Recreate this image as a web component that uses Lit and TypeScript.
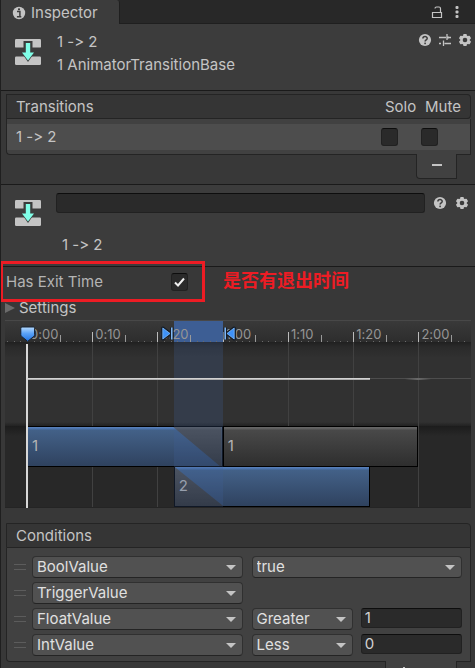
import { LitElement, html, svg, css } from "lit";
import { customElement } from "lit/decorators.js";

const helpIcon = html`<svg width="14" height="14" viewBox="0 0 14 14" aria-hidden="true">
  <circle cx="7" cy="7" r="6.1" fill="#c4c4c4" />
  <path d="M4.9 5.4C4.9 2.9 9.2 2.9 9.2 5.4C9.2 6.9 7.1 6.8 7.1 8.5" fill="none" stroke="#3c3c3c" stroke-width="1.5" />
  <rect x="6.3" y="9.6" width="1.6" height="1.6" fill="#3c3c3c" />
</svg>`;

const gearIcon = html`<svg width="14" height="14" viewBox="0 0 14 14" aria-hidden="true">
  <g fill="#c4c4c4">
    <rect x="5.2" y="0.9" width="3.6" height="12.2" rx="0.8" />
    <rect x="5.2" y="0.9" width="3.6" height="12.2" rx="0.8" transform="rotate(60 7 7)" />
    <rect x="5.2" y="0.9" width="3.6" height="12.2" rx="0.8" transform="rotate(120 7 7)" />
    <circle cx="7" cy="7" r="4.8" />
  </g>
  <circle cx="7" cy="7" r="2.3" fill="#3c3c3c" />
</svg>`;

const presetIcon = html`<svg width="14" height="14" viewBox="0 0 14 14" aria-hidden="true">
  <path d="M1 4.5H8M11 4.5H13M9 1V7M1 10.5H3M6.5 10.5H13M5.5 7.5V13" fill="none" stroke="#c4c4c4" stroke-width="1.3" />
  <path d="M9 4.5H11" stroke="#c4c4c4" stroke-width="1.8" />
</svg>`;

const transitionIcon = html`<svg class="asset" width="28" height="28" viewBox="0 0 28 28" aria-hidden="true">
  <rect x="1" y="1" width="26" height="8.6" rx="1.2" fill="#c4c4c4" />
  <rect x="1" y="18.4" width="26" height="8.6" rx="1.2" fill="#c4c4c4" />
  <path d="M9.5 3H18.5V12H22.3L14 24L5.7 12H9.5Z" fill="#3c3c3c" />
  <path d="M11.8 5H16.2V14.6H20L14 22.6L8 14.6H11.8Z" fill="#80ffe8" />
</svg>`;

const ORIGIN = 4.72;
const PER_FRAME = 1.4;
const at = (frame: number) => `left:${(ORIGIN + frame * PER_FRAME).toFixed(2)}%`;
const span = (from: number, to: number) =>
  `${at(from)};width:${((to - from) * PER_FRAME).toFixed(2)}%`;

@customElement("transition-timeline")
export class TransitionTimeline extends LitElement {
  static styles = css`
    :host {
      display: block;
      position: relative;
      overflow: hidden;
      color: #959595;
    }
    .ruler {
      position: relative;
      height: 22px;
      border-top: 1px solid #484848;
      background: linear-gradient(#393939, #2d2d2d);
      font-size: 13px;
      line-height: 26px;
      box-sizing: border-box;
    }
    .curve {
      position: relative;
      height: 84px;
      background: linear-gradient(#202020, #2a2a2a 5px, #313131 16px, #313131 80px, #222);
    }
    .tracks {
      position: relative;
      height: 82px;
      background: linear-gradient(#1c1c1c, #282828 10px);
      border-bottom: 1px solid #242424;
      box-sizing: border-box;
    }
    .label, .tick, .grid, .clip, .range, .dot, .line, .head, .mark {
      position: absolute;
    }
    .label { margin-left: 3px; top: 0; }
    .tick { bottom: 0; width: 1px; height: 7px; background: #999; }
    .tick.major { height: 10px; background: #bbb; }
    .dot { bottom: 0; width: 1px; height: 1px; background: #6a6a6a; }
    .grid { top: 0; bottom: 0; width: 1px; background: #414141; }
    .range { top: 0; bottom: 0; }
    .range.strong { background: #3d5e94; }
    .range.soft { background: rgba(62, 95, 150, 0.25); }
    .line { top: 36px; height: 2px; background: linear-gradient(#e4e4e4, #9a9a9a); }
    .line.dim { right: 0; height: 1px; background: #4d4d4d; }
    .line.blip { background: linear-gradient(90deg, transparent, #6a6a6a, transparent); }
    .clip {
      height: 41px;
      box-sizing: border-box;
      border: 1px solid #000;
      padding-left: 4px;
      line-height: 38px;
      font-size: 15px;
      color: #b4b4b4;
    }
    .blue { background: linear-gradient(#5b82bd, #4870a8 2px, #436188 3px, #2f425f); }
    .gray { background: linear-gradient(#686868, #5c5c5c 2px, #494949 3px, #2e2e2e); }
    .upper { top: 0; }
    .lower { top: 40px; }
    .fade { position: absolute; top: 0; bottom: 0; width: 25%; background: linear-gradient(#606060, #4e4e4e 3px, #303030); }
    .out { right: 0; clip-path: polygon(0 0, 100% 0, 100% 100%, 96% 100%); }
    .in { left: 0; clip-path: polygon(0 0, 100% 100%, 0 100%); }
    .text { position: relative; }
    .playhead { position: absolute; top: 24px; bottom: 0; width: 2px; margin-left: -1px; background: #d8d8d8; }
    .head { top: 6px; margin-left: -7px; }
    .mark { top: 5px; }
    .before { margin-left: -13px; }
    svg { display: block; }
  `;

  render() {
    const labels = ["0:00", "0:10", "0:20", "1:00", "1:10", "1:20", "2:00"];
    const frames = Array.from({ length: 71 }, (_, i) => i - 3);
    const grid = [10, 20, 40, 50, 60].map((f) => html`<div class="grid" style=${at(f)}></div>`);
    return html`
      <div class="ruler">
        <div class="range strong" style=${span(22.5, 30)}></div>
        ${frames.map((f) =>
          f > 0 && f % 5 === 0
            ? html`<div class="tick ${f % 10 ? "" : "major"}" style=${at(f)}></div>`
            : html`<div class="dot" style=${at(f)}></div>`
        )}
        ${labels.map((t, i) => html`<span class="label" style=${at(i * 10)}>${t}</span>`)}
        <svg class="mark before" style=${at(22.5)} width="13" height="15" viewBox="0 0 13 15">
          <path d="M1.8 2.2L9 7.5L1.8 12.8ZM10.8 1.5V13.5" fill="none" stroke="#141c28" stroke-width="3.4" stroke-linejoin="round" />
          <path d="M1.8 2L9 7.5L1.8 13Z" fill="#3f92f8" stroke="#7dbcff" stroke-width="0.8" />
          <path d="M10.8 1.5V13.5" stroke="#86c0ff" stroke-width="1.5" />
        </svg>
        <svg class="mark" style=${at(30)} width="13" height="15" viewBox="0 0 13 15">
          <path d="M11.2 2.2L4 7.5L11.2 12.8ZM2.2 1.5V13.5" fill="none" stroke="#141c28" stroke-width="3.4" stroke-linejoin="round" />
          <path d="M11.2 2L4 7.5L11.2 13Z" fill="#3f92f8" stroke="#7dbcff" stroke-width="0.8" />
          <path d="M2.2 1.5V13.5" stroke="#86c0ff" stroke-width="1.5" />
        </svg>
      </div>
      <div class="curve">
        ${grid}
        <div class="range soft" style=${span(22.5, 30)}></div>
        <div class="line" style=${span(0, 52.6)}></div>
        <div class="line dim" style=${at(52.6)}></div>
        <div class="line blip" style=${span(58, 62)}></div>
      </div>
      <div class="tracks">
        ${grid}
        <div class="clip upper gray" style=${span(30, 60)}><span class="text">1</span></div>
        <div class="clip upper blue" style=${span(0, 30)}>
          <div class="fade out"></div><span class="text">1</span>
        </div>
        <div class="clip lower blue" style=${span(22.5, 52.5)}>
          <div class="fade in"></div><span class="text">2</span>
        </div>
        <div class="range soft" style=${span(22.5, 30)}></div>
      </div>
      <div class="playhead" style=${at(0)}></div>
      <svg class="head" style=${at(0)} width="16" height="17" viewBox="0 0 16 17">
        ${svg`<defs><linearGradient id="g" x1="0" y1="0" x2="0" y2="1">
          <stop offset="0" stop-color="#b8dcff" /><stop offset="0.45" stop-color="#5aa2f8" /><stop offset="1" stop-color="#1e70e0" />
        </linearGradient></defs>`}
        <path d="M2 1H13.4Q14.6 1 14.6 2.2V8.6Q14.6 9.6 13.8 10.4L7.7 15.4L1.6 10.4Q0.8 9.6 0.8 8.6V2.2Q0.8 1 2 1Z" fill="url(#g)" stroke="#16202f" stroke-width="1" />
      </svg>
    `;
  }
}

interface Condition {
  name: string;
  mode?: string;
  value?: string;
}

const CONDITIONS: Condition[] = [
  { name: "BoolValue", mode: "true" },
  { name: "TriggerValue" },
  { name: "FloatValue", mode: "Greater", value: "1" },
  { name: "IntValue", mode: "Less", value: "0" },
];

@customElement("app-root")
export class AppRoot extends LitElement {
  static styles = css`
    :host {
      display: block;
      height: 100vh;
      overflow: hidden;
      box-sizing: border-box;
      border-left: 1px solid #1f1f1f;
      background: #383838;
      color: #c4c4c4;
      font: 15px/24px Inter, "Noto Sans CJK SC", sans-serif;
      font-variant-ligatures: none;
    }
    * { box-sizing: border-box; }
    svg { display: block; }
    button, input, select { font: inherit; color: inherit; margin: 0; }
    button { display: block; padding: 0; border: 0; background: none; }
    .tabs {
      display: flex;
      height: 24px;
      background: #282828;
      border-bottom: 1px solid #1f1f1f;
    }
    .tab {
      display: flex;
      align-items: center;
      gap: 5px;
      width: 119px;
      height: 24px;
      padding: 1px 0 0 11px;
      background: #3c3c3c;
      border-right: 1px solid #1f1f1f;
      border-radius: 0 3px 0 0;
    }
    .tools { display: flex; align-items: center; margin-left: auto; gap: 6px; padding-right: 3px; }
    .tabs .tools { padding-right: 11px; }
    .header {
      display: flex;
      padding: 6px 0 0 13px;
      height: 66px;
      background: #3c3c3c;
      line-height: 23px;
      gap: 15px;
    }
    .asset { margin-top: 8px; flex: none; }
    .title, .kind { margin: 0; font: inherit; line-height: 23px; }
    .header .tools { height: 20px; }
    .sep { height: 1px; background: #1a1a1a; }
    .block { padding: 0 4px 0 5px; }
    .transitions { padding-top: 3px; height: 93px; }
    table {
      width: 100%;
      border-spacing: 0;
      table-layout: fixed;
    }
    th {
      height: 25px;
      padding: 0;
      background: #353535;
      border: solid #242424;
      border-width: 1px 0;
      font-weight: 400;
      text-align: left;
      line-height: 22px;
    }
    th:first-child { border-left-width: 1px; padding-left: 9px; }
    th:last-child { border-right-width: 1px; border-top-right-radius: 4px; border-bottom-right-radius: 4px; }
    th.flag { padding-left: 4px; overflow: hidden; }
    .colflag { width: 40px; }
    .collast { width: 50px; }
    td {
      height: 36px;
      padding: 0;
      background: linear-gradient(#414141 5px, #4d4d4d 5px, #4d4d4d 31px, #414141 31px);
      border-bottom: 1px solid #242424;
    }
    td:first-child { border-left: 1px solid #242424; border-bottom-left-radius: 4px; padding-left: 9px; }
    td:last-child { border-right: 1px solid #242424; }
    .check {
      appearance: none;
      display: block;
      width: 17px;
      height: 18px;
      background: #2a2a2a;
      border: 1px solid #212121;
      border-top-color: #0d0d0d;
      border-radius: 3px;
    }
    .tick { position: relative; display: block; width: 17px; }
    .tick svg { position: absolute; left: 0; top: 0; pointer-events: none; }
    .foot {
      display: flex;
      justify-content: space-around;
      align-items: flex-start;
      position: relative;
      width: 41px;
      height: 25px;
      margin: -1px 14px 0 auto;
      background: #414141;
      border: 1px solid #242424;
      border-top: 0;
      border-radius: 0 0 0 4px;
    }
    .foot button { height: 22px; padding: 0 8px; }
    .wide { width: 72px; }
    .second { gap: 14px; height: 81px; padding-top: 8px; }
    .second .asset { margin-top: 6px; }
    .main { flex: 1; display: flex; flex-direction: column; gap: 20px; }
    .name { display: flex; align-items: center; gap: 8px; padding-right: 6px; }
    .main .title { padding-left: 6px; }
    .second .tools { height: 18px; gap: 8px; margin: 0; padding: 0; }
    .field {
      width: 100%;
      min-width: 0;
      height: 20px;
      padding: 0 3px;
      background: #2a2a2a;
      border: 1px solid #212121;
      border-top-color: #0d0d0d;
      border-radius: 3px;
      outline: 0;
    }
    .name .field { flex: 1; }
    .exit {
      position: relative;
      display: flex;
      align-items: center;
      height: 30px;
      padding-left: 5px;
      color: #b4b4b4;
    }
    .exit label { width: 165px; }
    .frame {
      position: absolute;
      left: -1px;
      top: -6px;
      width: 205px;
      height: 41px;
      border: 3px solid #ed1c24;
      pointer-events: none;
    }
    .note {
      margin: 0 0 6px 35px;
      color: #ed1c24;
      font: bold 18px/24px "Noto Sans CJK SC", sans-serif;
    }
    .fold { display: flex; align-items: center; gap: 4px; height: 23px; padding: 0 0 1px 4px; line-height: 22px; }
    transition-timeline { margin: 0 4px; }
    .conditions { padding-top: 15px; }
    .caption {
      margin: 0;
      height: 25px;
      padding-left: 9px;
      font: inherit;
      line-height: 24px;
      background: #353535;
      border: 1px solid #242424;
      border-top-right-radius: 4px;
    }
    .list {
      display: flex;
      flex-direction: column;
      gap: 4px;
      padding: 8px 8px 5px 7px;
      background: #414141;
      border: 1px solid #242424;
      border-top: 0;
      border-radius: 0 0 0 4px;
    }
    .row { display: grid; grid-template-columns: 9px 1fr 1fr; align-items: start; column-gap: 9px; height: 22px; }
    .grip { width: 12px; height: 6px; margin-top: 8px; border: solid #5c5c5c; border-width: 1px 0; }
    .args { display: grid; grid-auto-flow: column; grid-auto-columns: 1fr; gap: 8px; }
    .drop { position: relative; display: block; }
    .drop::after {
      content: "";
      position: absolute;
      right: 7px;
      top: 9px;
      border: 5px solid transparent;
      border-top-color: #c4c4c4;
      border-bottom: 0;
      pointer-events: none;
    }
    select {
      appearance: none;
      display: block;
      width: 100%;
      height: 22px;
      padding: 0 20px 0 4px;
      background: #515151;
      border: 1px solid #303030;
      border-bottom-color: #242424;
      border-radius: 4px;
      color: #e0e0e0;
      line-height: 20px;
    }
    .row .field { color: #d2d2d2; }
  `;

  private drop(label: string, value: string) {
    return html`<span class="drop"><select aria-label=${label}><option>${value}</option></select></span>`;
  }

  private args(c: Condition) {
    if (!c.mode) return "";
    return html`<div class="args">
      ${this.drop(`${c.name} mode`, c.mode)}
      ${c.value === undefined ? "" : html`<input class="field" aria-label="${c.name} threshold" .value=${c.value} />`}
    </div>`;
  }

  render() {
    const minus = html`<svg width="10" height="22" viewBox="0 0 10 22"><path d="M0 11H10" stroke="#c4c4c4" stroke-width="2" /></svg>`;
    return html`
      <div class="tabs">
        <div class="tab">
          <svg width="14" height="14" viewBox="0 0 14 14" aria-hidden="true">
            <circle cx="7" cy="7" r="6.2" fill="#c4c4c4" />
            <path d="M5 5.6H7.9V10.6M4.9 10.7H9.3" fill="none" stroke="#3c3c3c" stroke-width="1.5" />
            <rect x="6" y="2.4" width="2" height="1.8" fill="#3c3c3c" />
          </svg>
          Inspector
        </div>
        <div class="tools">
          <button aria-label="Lock">
            <svg width="14" height="14" viewBox="0 0 14 14">
              <path d="M2.5 7.5H11.5V12.5H2.5ZM10.5 7.5V3.5Q10.5 2 9 2H6.5Q5 2 5 3.5" fill="none" stroke="#c4c4c4" stroke-width="1.2" />
            </svg>
          </button>
          <button aria-label="Menu">
            <svg width="14" height="14" viewBox="0 0 14 14" fill="#c4c4c4">
              <rect x="5.5" y="1" width="3" height="3" rx="1" />
              <rect x="5.5" y="5.5" width="3" height="3" rx="1" />
              <rect x="5.5" y="10" width="3" height="3" rx="1" />
            </svg>
          </button>
        </div>
      </div>
      <header class="header">
        ${transitionIcon}
        <div>
          <h1 class="title">1 -&gt; 2</h1>
          <p class="kind">1 AnimatorTransitionBase</p>
        </div>
        <div class="tools">
          <button aria-label="Help">${helpIcon}</button>
          <button aria-label="Presets">${presetIcon}</button>
          <button aria-label="Options">${gearIcon}</button>
        </div>
      </header>
      <div class="sep"></div>
      <section class="block transitions">
        <table>
          <colgroup><col /><col class="colflag" /><col class="collast" /></colgroup>
          <thead>
            <tr><th>Transitions</th><th class="flag">Solo</th><th class="flag">Mute</th></tr>
          </thead>
          <tbody>
            <tr>
              <td>1 -&gt; 2</td>
              <td><input class="check" type="checkbox" aria-label="Solo" /></td>
              <td><input class="check" type="checkbox" aria-label="Mute" /></td>
            </tr>
          </tbody>
        </table>
        <div class="foot"><button aria-label="Remove transition">${minus}</button></div>
      </section>
      <div class="sep"></div>
      <section class="header second">
        ${transitionIcon}
        <div class="main">
          <div class="name">
            <input class="field" aria-label="Transition name" />
            <div class="tools">
              <button aria-label="Help">${helpIcon}</button>
              <button aria-label="Options">${gearIcon}</button>
            </div>
          </div>
          <h2 class="title">1 -&gt; 2</h2>
        </div>
      </section>
      <div class="sep"></div>
      <div class="exit">
        <label for="exit">Has Exit Time</label>
        <span class="tick">
          <input class="check" id="exit" type="checkbox" checked />
          <svg width="17" height="18" viewBox="0 0 17 18"><path d="M4 9.5L7 12.5L13 5.5" fill="none" stroke="#f0f0f0" stroke-width="2" /></svg>
        </span>
        <div class="frame"></div>
        <p class="note">是否有退出时间</p>
      </div>
      <div class="fold">
        <svg width="10" height="12" viewBox="0 0 10 12" aria-hidden="true"><path d="M0 1V11L10 6Z" fill="#6b6b6b" /></svg>
        Settings
      </div>
      <transition-timeline></transition-timeline>
      <section class="block conditions">
        <h2 class="caption">Conditions</h2>
        <div class="list">
          ${CONDITIONS.map(
            (c) => html`<div class="row">
              <div class="grip"></div>
              ${this.drop("Parameter", c.name)} ${this.args(c)}
            </div>`
          )}
        </div>
        <div class="foot wide">
          <button aria-label="Add condition">
            <svg width="10" height="22" viewBox="0 0 10 22"><path d="M0 11H10M5 6V16" stroke="#c4c4c4" stroke-width="2" /></svg>
          </button>
          <button aria-label="Remove condition">${minus}</button>
        </div>
      </section>
    `;
  }
}
